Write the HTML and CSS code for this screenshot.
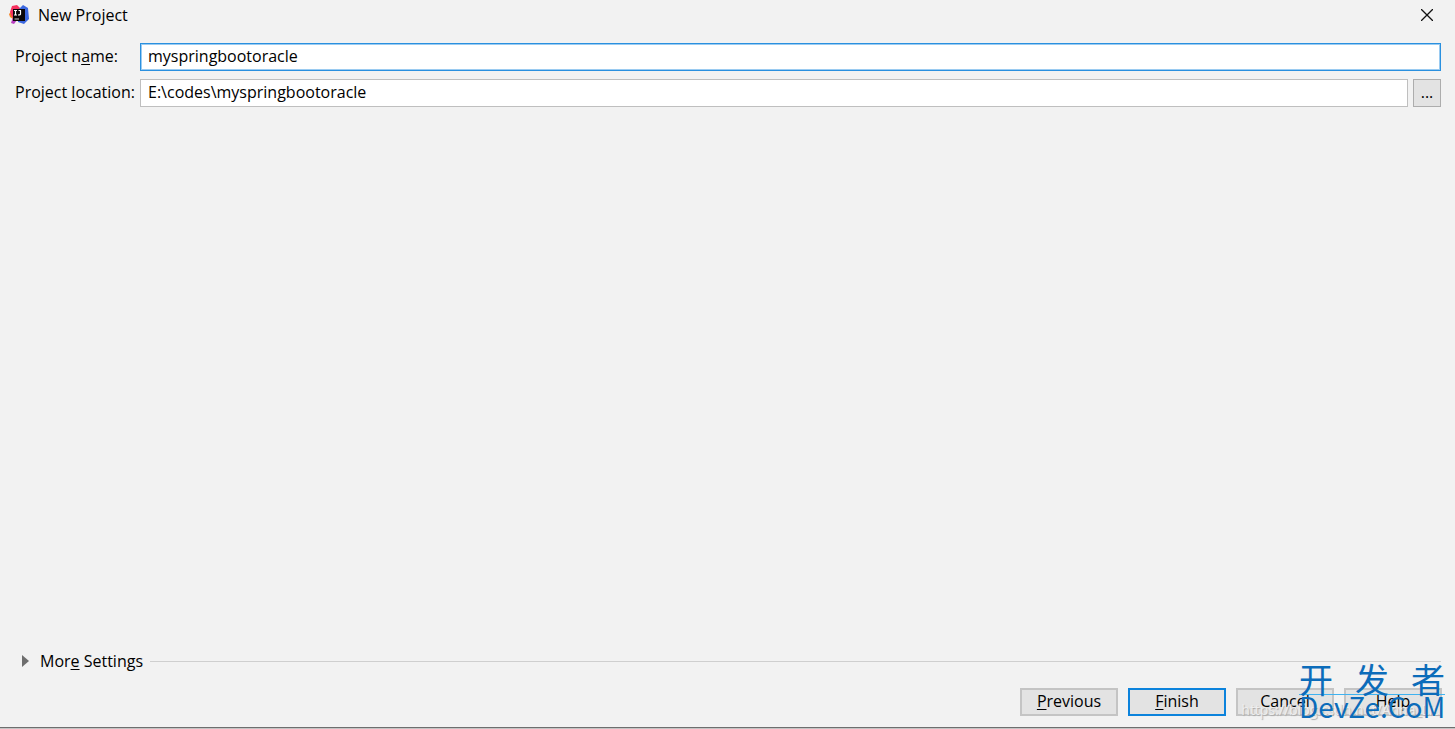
FILE: index.html
```html
<!DOCTYPE html>
<html lang="en">
<head>
<meta charset="utf-8">
<title>New Project</title>
<link rel="stylesheet" href="styles.css">
</head>
<body>

<form class="dialog">
	<div class="title_bar">
		<svg class="logo" viewBox="0 0 20 20" width="20" height="20" aria-hidden="true">
			<path d="M0 9L2 7L5 9L7 13L4 14L1 12Z" fill="#f58220"/>
			<path d="M1 7L3 1L8 0L12 4L6 12L3 12Z" fill="#f5315f"/>
			<path d="M10 4L14 0L19 3L20 14L15 19L9 17Z" fill="#3c68e0"/>
			<path d="M4 12L8 15L5 19L2 18Z" fill="#b83fc0"/>
			<path d="M4 4H16V16H4Z" fill="#0b0708"/>
			<path d="M5 5.500H8M6.500 5.500V10M5 10H8M9.500 5.500H12M11.500 5.500V9Q11.500 10 9 10" fill="none" stroke="#fff" stroke-width="1.200"/>
			<path d="M5.500 14H10" stroke="#ccc"/>
		</svg>
		<h1>New Project</h1>
		<button type="button" class="btn_close" aria-label="Close">
			<svg viewBox="0 0 12 12" width="12" height="12"><path d="M0 0L12 12M12 0L0 12" stroke="#111" stroke-width="1.300"/></svg>
		</button>
	</div>

	<div class="fields">
		<label for="projectName">Project n<u>a</u>me:</label>
		<input type="text" id="projectName" class="inp inp_focus" value="myspringbootoracle">
		<label for="projectLocation">Project <u>l</u>ocation:</label>
		<div class="location_box">
			<input type="text" id="projectLocation" class="inp" value="E:\codes\myspringbootoracle">
			<button type="button" class="btn btn_browse" aria-label="Browse">...</button>
		</div>
	</div>

	<button type="button" class="more_settings">
		<svg viewBox="0 0 7 12" width="7" height="12" aria-hidden="true"><path d="M0 0L7 6L0 12Z" fill="#6e6e6e"/></svg>
		<span>Mor<u>e</u> Settings</span>
	</button>

	<div class="btn_area">
		<button type="button" class="btn"><u>P</u>revious</button>
		<button type="submit" class="btn btn_default"><u>F</u>inish</button>
		<button type="button" class="btn">Cancel</button>
		<button type="button" class="btn">Help</button>
	</div>
</form>

<span class="source_mark">https://blog.csdn.net/Anna_Liu</span>
<div class="site_mark">
	<p class="site_cn" lang="zh"><span>开</span><span>发</span><span>者</span></p>
	<p class="site_en">DevZe.CoM</p>
</div>

</body>
</html>
```
FILE: styles.css
```css
*{box-sizing:border-box;}
body,h1,p,input,button{margin:0;padding:0;}
body{position:relative;background:#f2f2f2;color:#000;}
body,input,button{font:16px/20px "Open Sans","Noto Sans CJK SC",sans-serif;}
h1{font-size:16px;font-weight:normal;}
button{border:none;background:none;color:inherit;}
u{text-underline-offset:2px;}

.dialog{display:flex;flex-direction:column;height:100vh;border-bottom:1px solid #c4c4c4;padding:0 14px 11px;box-shadow:inset 0 -1px #6e6e6e;}

/* title */
.title_bar{display:flex;align-items:center;height:30px;margin:0 0 0 -5px;}
.title_bar h1{flex:1;padding-left:9px;}
.btn_close{display:flex;align-items:center;justify-content:center;width:28px;height:28px;}

/* form */
.fields{display:grid;grid-template-columns:120px 1fr;align-items:center;gap:8px 6px;margin:13px 0 auto;}
.fields label{padding:0 0 2px 1px;white-space:nowrap;}
.inp{width:100%;height:28px;padding:0 7px 2px;border:1px solid #bfbfbf;background:#fff;outline:none;}
.inp_focus{border-color:#2a90df;box-shadow:inset 0 0 0 1px #9acbf1;}
.location_box{display:flex;gap:5px;}

.more_settings{display:flex;align-items:center;padding-left:8px;text-align:left;}
.more_settings span{padding:0 7px 0 11px;}
.more_settings:after{content:'';flex:1;height:1px;background:#cfcfcf;}

/* buttons */
.btn{width:98px;height:28px;padding-bottom:2px;border:2px solid #c4c4c4;background:#e3e3e3;}
.btn_default{border-color:#0c83dc;}
.btn_browse{flex:none;width:28px;border:1px solid #adadad;}
.btn_area{display:flex;justify-content:flex-end;gap:10px;margin:17px -1px 1px 0;}

/* marks over the window */
.source_mark{position:absolute;right:14px;bottom:10px;color:#eee;font-size:14px;line-height:18px;text-shadow:1px 1px 1px #aaa;}
.site_mark{position:absolute;right:10px;bottom:11px;width:146px;color:#0c6cba;font-family:"Noto Sans CJK SC",sans-serif;}
.site_cn{display:flex;justify-content:space-between;padding-bottom:2px;border-bottom:1px solid #3fb2f0;font-size:34px;line-height:26px;}
.site_en{font-size:28px;line-height:23px;}
```
